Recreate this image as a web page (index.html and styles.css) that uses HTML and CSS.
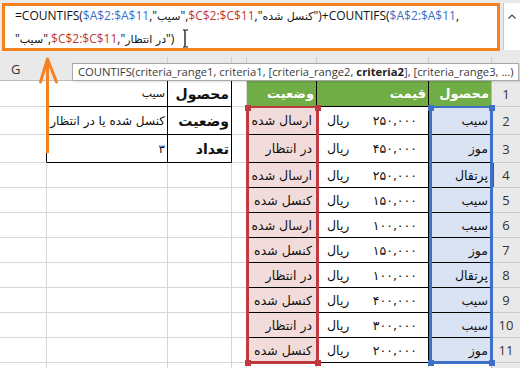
FILE: index.html
```html
<!DOCTYPE html>
<html lang="fa">
<head>
<meta charset="utf-8">
<title>COUNTIFS</title>
<link rel="stylesheet" href="styles.css">
</head>
<body>
<div class="app">
  <div class="fbar">
    <div class="fx">
      <div class="fx-text">=COUNTIFS(<span class="ra">$A$2:$A$11</span>,"<span class="ar">سیب</span>",<span class="rc">$C$2:$C$11</span>,"<span class="ar">کنسل شده</span>")+COUNTIFS(<span class="ra">$A$2:$A$11</span>,<br>"<span class="ar">سیب</span>",<span class="rc">$C$2:$C$11</span>,"<span class="ar">در انتظار</span>")</div>
    </div>
    <div class="fx-side">
      <svg class="chev" width="8" height="5" viewBox="0 0 8 5"><path d="M0.5 4.5 L4 1 L7.5 4.5" fill="none" stroke="#444" stroke-width="1.2"/></svg>
    </div>
  </div>

  <div class="colhead">
    <div class="ch ch-g">G</div><div class="ch"></div><div class="ch"></div><div class="ch"></div><div class="ch"></div><div class="ch"></div><div class="ch"></div><div class="ch ch-corner"></div>
  </div>

  <div class="sheet">
    <!-- row 1 -->
    <div class="c lt-edge"></div><div class="c lt lt-val small">سیب</div><div class="c lt lt-lab">محصول</div><div class="c"></div><div class="c t hd">وضعیت</div><div class="c t hd">قیمت</div><div class="c t hd last">محصول</div><div class="c rh">1</div>
    <!-- row 2 -->
    <div class="c lt-edge"></div><div class="c lt lt-val">کنسل شده یا در انتظار</div><div class="c lt lt-lab">وضعیت</div><div class="c"></div><div class="c t st">ارسال شده</div><div class="c t pr"><span>ریال</span><span class="num">۲۵۰,۰۰۰</span></div><div class="c t pd last">سیب</div><div class="c rh">2</div>
    <!-- row 3 -->
    <div class="c lt-edge"></div><div class="c lt lt-val">۳</div><div class="c lt lt-lab">تعداد</div><div class="c"></div><div class="c t st">در انتظار</div><div class="c t pr"><span>ریال</span><span class="num">۴۵۰,۰۰۰</span></div><div class="c t pd last">موز</div><div class="c rh">3</div>
    <!-- row 4 -->
    <div class="c"></div><div class="c"></div><div class="c"></div><div class="c"></div><div class="c t st">ارسال شده</div><div class="c t pr"><span>ریال</span><span class="num">۲۵۰,۰۰۰</span></div><div class="c t pd last">پرتقال</div><div class="c rh active">4</div>
    <!-- row 5 -->
    <div class="c"></div><div class="c"></div><div class="c"></div><div class="c"></div><div class="c t st">کنسل شده</div><div class="c t pr"><span>ریال</span><span class="num">۱۵۰,۰۰۰</span></div><div class="c t pd last">سیب</div><div class="c rh">5</div>
    <!-- row 6 -->
    <div class="c"></div><div class="c"></div><div class="c"></div><div class="c"></div><div class="c t st">ارسال شده</div><div class="c t pr"><span>ریال</span><span class="num">۱۰۰,۰۰۰</span></div><div class="c t pd last">سیب</div><div class="c rh">6</div>
    <!-- row 7 -->
    <div class="c"></div><div class="c"></div><div class="c"></div><div class="c"></div><div class="c t st">کنسل شده</div><div class="c t pr"><span>ریال</span><span class="num">۱۵۰,۰۰۰</span></div><div class="c t pd last">موز</div><div class="c rh">7</div>
    <!-- row 8 -->
    <div class="c"></div><div class="c"></div><div class="c"></div><div class="c"></div><div class="c t st">در انتظار</div><div class="c t pr"><span>ریال</span><span class="num">۱۰۰,۰۰۰</span></div><div class="c t pd last">پرتقال</div><div class="c rh">8</div>
    <!-- row 9 -->
    <div class="c"></div><div class="c"></div><div class="c"></div><div class="c"></div><div class="c t st">کنسل شده</div><div class="c t pr"><span>ریال</span><span class="num">۴۰۰,۰۰۰</span></div><div class="c t pd last">سیب</div><div class="c rh">9</div>
    <!-- row 10 -->
    <div class="c"></div><div class="c"></div><div class="c"></div><div class="c"></div><div class="c t st">در انتظار</div><div class="c t pr"><span>ریال</span><span class="num">۳۰۰,۰۰۰</span></div><div class="c t pd last">سیب</div><div class="c rh">10</div>
    <!-- row 11 -->
    <div class="c"></div><div class="c"></div><div class="c"></div><div class="c"></div><div class="c t st">کنسل شده</div><div class="c t pr"><span>ریال</span><span class="num">۲۰۰,۰۰۰</span></div><div class="c t pd last">موز</div><div class="c rh">11</div>
    <!-- row 12 -->
    <div class="c"></div><div class="c"></div><div class="c"></div><div class="c"></div><div class="c"></div><div class="c"></div><div class="c last"></div><div class="c rh"></div>
  </div>

  <div class="tip">COUNTIFS(criteria_range1, criteria1, [criteria_range2, <b>criteria2</b>], [criteria_range3, ...)</div>

  <div class="sel sel-red"></div>
  <div class="sel sel-blue"></div>
  <span class="hdl red" style="left:245px;top:105px"></span>
  <span class="hdl red" style="left:315px;top:105px"></span>
  <span class="hdl red" style="left:245px;top:360px"></span>
  <span class="hdl red" style="left:315px;top:360px"></span>
  <span class="hdl blue" style="left:428px;top:105px"></span>
  <span class="hdl blue" style="left:489px;top:105px"></span>
  <span class="hdl blue" style="left:428px;top:360px"></span>
  <span class="hdl blue" style="left:489px;top:360px"></span>

  <svg class="ibeam" width="7" height="19" viewBox="0 0 7 19"><path d="M1 1 H3 V18 H1 M6 1 H4 M6 18 H4" fill="none" stroke="#000" stroke-width="1.2"/></svg>

  <svg class="arrow" width="520" height="368" viewBox="0 0 520 368">
    <path d="M47.5 153 V60" fill="none" stroke="#f5821f" stroke-width="3"/>
    <path d="M40.5 82 L47.5 59 L56.5 82" fill="none" stroke="#f5821f" stroke-width="3" stroke-linejoin="round" stroke-linecap="round"/>
  </svg>
</div>
</body>
</html>
```
FILE: styles.css
```css
html, body {
  margin: 0;
  padding: 0;
  background: #fff;
}
body {
  width: 520px;
  height: 368px;
  overflow: hidden;
  font-family: "Open Sans", "DejaVu Sans", sans-serif;
}
.app {
  position: relative;
  width: 520px;
  height: 368px;
  overflow: hidden;
}

/* formula bar */
.fbar {
  height: 57px;
  box-sizing: border-box;
  background: #e9e9e9;
  display: flex;
  align-items: flex-start;
  padding: 3px 0 0 2px;
}
.fx {
  width: 498px;
  height: 48px;
  box-sizing: border-box;
  border: 3px solid #f5821f;
  background: #fff;
  padding: 0 0 0 10px;
  overflow: hidden;
}
.fx-text {
  margin-top: -1px;
  font-family: "Open Sans", "DejaVu Sans", sans-serif;
  font-size: 12px;
  line-height: 22px;
  color: #111;
  white-space: nowrap;
}
.ar {
  font-family: "DejaVu Sans", sans-serif;
  font-size: 11px;
}
.ra { color: #3a6fc8; }
.rc { color: #c0392f; }
.fx-side {
  margin-left: 3px;
  width: 17px;
  height: 47px;
  box-sizing: border-box;
  background: #fff;
  border-left: 1px solid #c9c9c9;
  display: flex;
  justify-content: center;
  padding-top: 11px;
}
.chev { display: block; }

/* column headers */
.colhead {
  height: 24px;
  box-sizing: border-box;
  display: grid;
  grid-template-columns: 47px 121px 64px 15px 70px 112px 63px 28px;
  background: #e9e9e9;
  border-bottom: 1px solid #bdbdbd;
}
.ch {
  border-right: 1px solid #cfcfcf;
  font-size: 13px;
  color: #333;
  display: flex;
  align-items: center;
  justify-content: center;
}
.ch-g {
  justify-content: flex-start;
  padding-left: 11px;
}
.ch-corner { border-right: none; }

/* sheet */
.sheet {
  display: grid;
  grid-template-columns: 47px 121px 64px 15px 70px 112px 63px 28px;
  grid-template-rows: 26px 28px 28px repeat(8, 25px) 25px;
}
.c {
  box-sizing: border-box;
  border-right: 1px solid #d6d6d6;
  border-bottom: 1px solid #d6d6d6;
  display: flex;
  align-items: center;
  justify-content: flex-end;
  padding: 0 2px;
  white-space: nowrap;
  overflow: hidden;
  font-family: "DejaVu Sans", sans-serif;
  font-size: 12.5px;
  color: #111;
}
.lt-edge { border-right-color: #000; }
.lt {
  border-right-color: #000;
  border-bottom-color: #000;
}
.lt-lab { font-weight: bold; font-size: 14px; padding-right: 2px; }
.lt-val { font-size: 12px; padding-right: 2px; }
.lt-val.small { font-size: 11px; }

.t {
  border-bottom-color: #000;
  border-right-color: #000;
}
.last { border-right-color: #bcbcbc; }
.t.last { border-right-color: #bcbcbc; }
.hd {
  background: #70ad47;
  color: #fff;
  font-weight: bold;
  font-size: 13px;
}
.st { background: #f2dcdb; padding-right: 4px; }
.pd { background: #dae3f3; padding-right: 3px; }
.pr {
  justify-content: space-between;
  padding: 0 11px 0 10px;
}
.num { letter-spacing: 0.5px; }

.rh {
  background: #e9e9e9;
  border-right: none;
  border-bottom-color: #cbcbcb;
  justify-content: center;
  font-family: "Open Sans", sans-serif;
  font-size: 13px;
  color: #333;
}
.rh.active { box-shadow: inset 2px 0 0 #217346; }

/* overlays */
.tip {
  position: absolute;
  left: 72px;
  top: 63px;
  width: 447px;
  height: 18px;
  box-sizing: border-box;
  border: 1px solid #a9a9a9;
  background: #fff;
  box-shadow: 1px 1px 2px rgba(0, 0, 0, 0.12);
  font-family: "Open Sans", sans-serif;
  font-size: 11.25px;
  line-height: 16px;
  padding-left: 5px;
  color: #3a3a3a;
  white-space: nowrap;
  overflow: hidden;
}
.tip b { color: #222; }

.sel {
  position: absolute;
  box-sizing: border-box;
  top: 106px;
  height: 258px;
  border: 3px solid;
  border-top-width: 2px;
}
.sel-red { left: 246px; width: 73px; border-color: #c0393f; }
.sel-blue { left: 429px; width: 64px; border-color: #3f70c6; }
.hdl {
  position: absolute;
  width: 6px;
  height: 6px;
}
.hdl.red { background: #c0393f; }
.hdl.blue { background: #3f70c6; }

.ibeam {
  position: absolute;
  left: 182px;
  top: 29px;
}
.arrow {
  position: absolute;
  left: 0;
  top: 0;
  pointer-events: none;
}
```
